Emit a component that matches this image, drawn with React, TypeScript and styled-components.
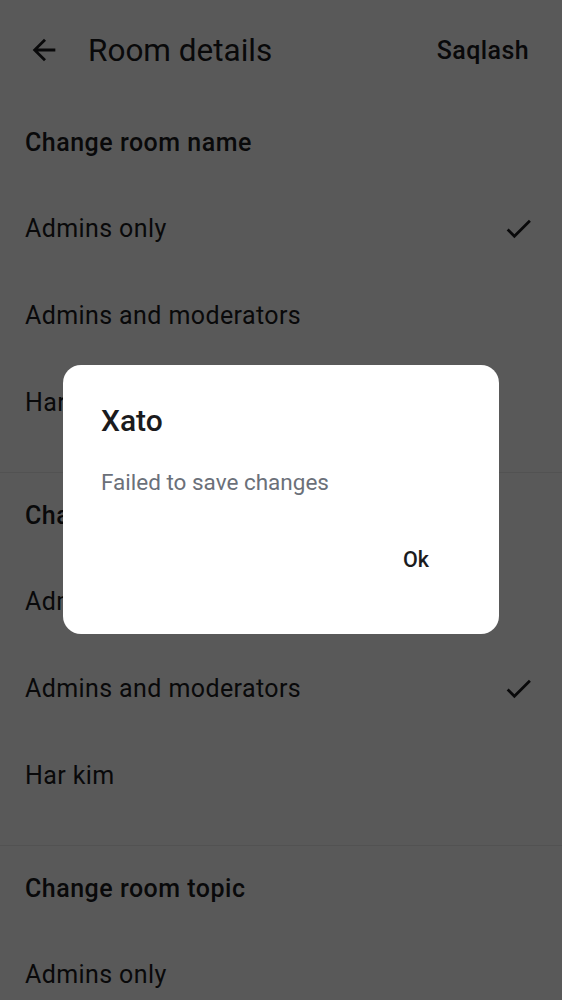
import styled, { createGlobalStyle } from 'styled-components';

const GlobalStyle = createGlobalStyle`
  html, body {
    margin: 0;
    padding: 0;
    background: #ffffff;
  }
  body {
    font-family: Roboto, "Noto Sans", "Liberation Sans", sans-serif;
    color: #1b1b1d;
  }
`;

// selected index per permission section
const sections = [
  { title: 'Change room name', selected: 0 },
  { title: 'Change room avatar', selected: 1 },
  { title: 'Change room topic', selected: 1 },
];

const options = ['Admins only', 'Admins and moderators', 'Har kim'];

const BackIcon = () => (
  <svg width="34" height="34" viewBox="0 0 24 24" fill="currentColor">
    <path d="M20 11H7.83l5.59-5.59L12 4l-8 8 8 8 1.41-1.41L7.83 13H20v-2z" />
  </svg>
);

const CheckIcon = () => (
  <svg width="33" height="33" viewBox="0 0 24 24" fill="currentColor">
    <path d="M9 16.17L4.83 12l-1.42 1.41L9 19 21 7l-1.41-1.41z" />
  </svg>
);

const App = () => {
  return (
    <>
      <GlobalStyle />
      <Page>
        <Header>
          <BackBtn>
            <BackIcon />
          </BackBtn>
          <Title>Room details</Title>
          <SaveBtn>Saqlash</SaveBtn>
        </Header>
        {sections.map((s) => (
          <Section key={s.title}>
            <SectionTitle>{s.title}</SectionTitle>
            {options.map((o, i) => (
              <Row key={o}>
                <RowLabel>{o}</RowLabel>
                {i === s.selected && (
                  <Check>
                    <CheckIcon />
                  </Check>
                )}
              </Row>
            ))}
          </Section>
        ))}
      </Page>
      <Scrim>
        <Dialog>
          <DialogTitle>Xato</DialogTitle>
          <DialogText>Failed to save changes</DialogText>
          <DialogActions>
            <OkBtn>Ok</OkBtn>
          </DialogActions>
        </Dialog>
      </Scrim>
    </>
  );
};

const Page = styled.div`
  width: 100%;
  height: 1000px;
  overflow: hidden;
  background: #ffffff;
`;

const Header = styled.div`
  height: 100px;
  display: flex;
  align-items: center;
  padding: 0 33px 0 27px;
`;

const BackBtn = styled.div`
  width: 34px;
  height: 34px;
  display: flex;
  align-items: center;
  justify-content: center;
  margin-top: -1px;
  color: #1b1b1d;
`;

const Title = styled.h1`
  flex: 1;
  margin: 0 0 0 27px;
  font-size: 31.5px;
  font-weight: 400;
  color: #1b1b1d;
`;

const SaveBtn = styled.span`
  font-size: 25px;
  font-weight: 500;
  letter-spacing: 0.4px;
  color: #1b1b1d;
`;

const Section = styled.div`
  padding-bottom: 26px;
  border-bottom: 1px solid #ebebeb;
`;

const SectionTitle = styled.div`
  height: 85px;
  display: flex;
  align-items: center;
  padding: 0 25px;
  font-size: 25px;
  font-weight: 500;
  letter-spacing: 0.5px;
  color: #1b1b1d;
`;

const Row = styled.div`
  height: 87px;
  display: flex;
  align-items: center;
  justify-content: space-between;
  padding: 0 27px 0 25px;
`;

const RowLabel = styled.span`
  font-size: 25px;
  letter-spacing: 0.4px;
  color: #1b1b1d;
`;

const Check = styled.span`
  display: flex;
  color: #1b1b1d;
`;

const Scrim = styled.div`
  position: fixed;
  inset: 0;
  background: rgba(0, 0, 0, 0.65);
  display: flex;
  align-items: center;
  justify-content: center;
`;

const Dialog = styled.div`
  width: 436px;
  height: 269px;
  box-sizing: border-box;
  background: #ffffff;
  border-radius: 18px;
  padding: 36px 38px 0 38px;
  display: flex;
  flex-direction: column;
  margin-top: -1px;
`;

const DialogTitle = styled.div`
  font-size: 30px;
  font-weight: 500;
  color: #1b1b1d;
  line-height: 40px;
`;

const DialogText = styled.div`
  margin-top: 25px;
  font-size: 22.5px;
  color: #6b7079;
  line-height: 32px;
`;

const DialogActions = styled.div`
  display: flex;
  justify-content: flex-end;
  margin-top: 47px;
  padding-right: 32px;
`;

const OkBtn = styled.span`
  font-size: 21.5px;
  font-weight: 500;
  color: #1b1b1d;
  line-height: 30px;
`;

export default App;
